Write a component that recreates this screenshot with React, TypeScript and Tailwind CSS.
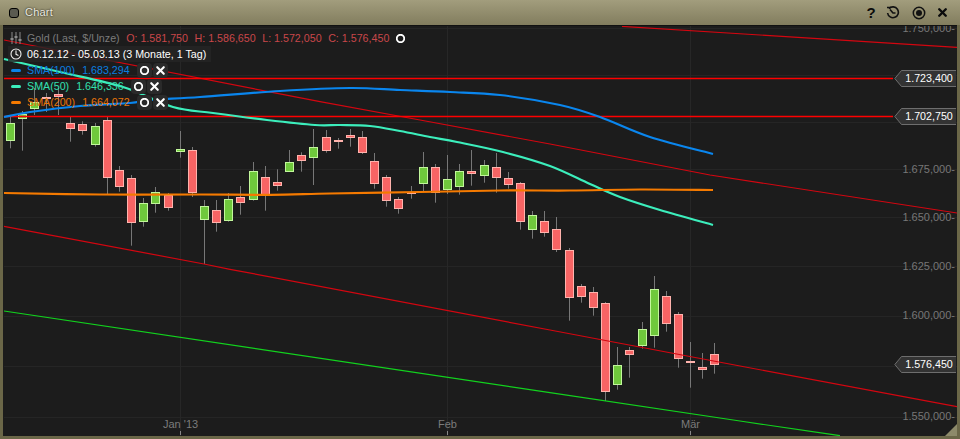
import { Circle, X } from 'lucide-react';

const font = { fontFamily: '"Liberation Sans", Arial, sans-serif' };

type Candle = [number, number, number, number, number, 'g' | 'r'];

// x, wick top, body top, body bottom, wick bottom
const candles: Candle[] = [
  [10.5, 115, 123.3, 140.7, 148.3, 'g'],
  [22.5, 111, 114.3, 118.7, 150.7, 'g'],
  [34.5, 88, 101.7, 108, 115, 'g'],
  [46.5, 93, 97, 98, 112, 'r'],
  [58.5, 88, 94, 96, 115, 'r'],
  [70.5, 117, 123.3, 128.7, 141.7, 'r'],
  [82.5, 121.3, 124.3, 130.7, 134.7, 'r'],
  [95, 123, 126.3, 144.7, 146.7, 'g'],
  [107, 117, 120.3, 177.7, 195, 'r'],
  [119.3, 166, 170.3, 186.7, 191.7, 'r'],
  [131.3, 175, 178.3, 222.7, 245.7, 'r'],
  [143.3, 198, 203.3, 221.7, 226.7, 'g'],
  [155.3, 187, 192.3, 203.7, 212.7, 'g'],
  [168.3, 193, 195, 206.7, 210.7, 'r'],
  [180.3, 131, 149.3, 151.7, 157.7, 'g'],
  [192.3, 147, 150.3, 192.7, 197, 'r'],
  [204.3, 200, 206.3, 219.7, 264, 'g'],
  [216.3, 200, 210.3, 222.7, 231.7, 'r'],
  [228.3, 193, 199.3, 220.7, 221.7, 'g'],
  [240.3, 186, 197.3, 202.7, 214.7, 'r'],
  [253.3, 162, 171.3, 199.7, 200.7, 'g'],
  [265.3, 166, 177.3, 194.7, 210.7, 'r'],
  [277.3, 169.3, 182.3, 185.7, 190.7, 'r'],
  [289.3, 150, 162.3, 171.7, 172, 'g'],
  [301.3, 152.3, 155.3, 160.7, 171.7, 'r'],
  [313.3, 129, 147.3, 157.7, 185, 'g'],
  [326.3, 130, 137.3, 150.7, 152.7, 'r'],
  [338.3, 138, 140, 141, 148.7, 'r'],
  [350.3, 129, 135.3, 137.7, 146.7, 'r'],
  [362.3, 131, 137.3, 152.7, 154, 'r'],
  [374.3, 153, 161.3, 183.7, 188.7, 'r'],
  [386.3, 175, 177.3, 200.7, 206.7, 'r'],
  [398.3, 197, 199.3, 208.7, 213.7, 'r'],
  [411.3, 186, 191.5, 192, 198.7, 'r'],
  [423.3, 152, 167.3, 183.7, 192, 'g'],
  [435.3, 164, 167.3, 192, 202.7, 'r'],
  [447.3, 155, 179.3, 189.7, 194, 'g'],
  [459.3, 164, 171.3, 186.7, 194.7, 'g'],
  [471.3, 150, 171.3, 173.7, 185.7, 'r'],
  [484.3, 160, 165.3, 175.7, 182.7, 'g'],
  [496.3, 153, 167.3, 177.7, 192.7, 'r'],
  [508.3, 172, 178.3, 184.7, 188.7, 'r'],
  [520.3, 182, 183.3, 221.7, 229.7, 'r'],
  [532.3, 211, 215.3, 229.7, 238.7, 'g'],
  [544.3, 211, 221.3, 232.7, 236.7, 'r'],
  [556.3, 217, 229.3, 249.3, 252, 'r'],
  [569.3, 248, 250, 296.7, 320.7, 'r'],
  [581.3, 284, 286.3, 296.7, 302.7, 'r'],
  [593.3, 287, 292.3, 307.7, 315.7, 'r'],
  [605.3, 302, 303.3, 391.7, 401, 'r'],
  [617.3, 347, 365.3, 384.7, 389.7, 'g'],
  [629.3, 347, 350.3, 354.7, 377.7, 'r'],
  [642.3, 322, 329.3, 345.7, 348.7, 'g'],
  [654.3, 276, 289.3, 335.7, 347.7, 'g'],
  [666.3, 291, 296.3, 323.7, 331.7, 'r'],
  [678.3, 312, 314.3, 358.7, 367.7, 'r'],
  [690.3, 342, 361.3, 362.7, 387.7, 'r'],
  [702.3, 353, 367.3, 369.7, 378.7, 'r'],
  [714.3, 343, 354.3, 364.7, 373.7, 'r'],
];

const gridY = [28.5, 75.5, 122.5, 169.5, 217.5, 266.5, 316.5, 366.5, 417.5];
const gridX = [180.5, 447.5, 690.5];

const sma100: number[][] = [[4, 117], [30, 112], [80, 106], [130, 103], [150, 100], [200, 97], [280, 91], [350, 88], [400, 90], [450, 92], [500, 95], [560, 105], [600, 117], [650, 137], [713, 154]];
const sma50: number[][] = [[4, 59], [60, 72], [123, 87], [173, 107], [213, 113], [267, 120], [315, 125], [340, 125], [370, 126], [400, 131], [430, 137], [457, 142], [503, 152], [550, 166], [590, 184], [620, 197], [660, 210], [713, 225]];
const sma200: number[][] = [[4, 193], [100, 194.5], [200, 194.5], [270, 194.8], [330, 193.5], [420, 192], [500, 190.5], [570, 190.5], [640, 189.5], [713, 190]];

const axisLabels = [
  { text: '1.675,000', top: 138 },
  { text: '1.650,000', top: 186 },
  { text: '1.625,000', top: 235 },
  { text: '1.600,000', top: 284 },
  { text: '1.550,000', top: 385 },
];

// catmull-rom through the points so the averages don't look kinked
function smooth(pts: number[][]) {
  let d = `M${pts[0][0]} ${pts[0][1]}`;
  for (let i = 0; i < pts.length - 1; i++) {
    const p0 = pts[i - 1] || pts[i];
    const p1 = pts[i];
    const p2 = pts[i + 1];
    const p3 = pts[i + 2] || p2;
    const c1x = p1[0] + (p2[0] - p0[0]) / 6;
    const c1y = p1[1] + (p2[1] - p0[1]) / 6;
    const c2x = p2[0] - (p3[0] - p1[0]) / 6;
    const c2y = p2[1] - (p3[1] - p1[1]) / 6;
    d += ` C${c1x} ${c1y} ${c2x} ${c2y} ${p2[0]} ${p2[1]}`;
  }
  return d;
}

function PriceTag({ value, top }: { value: string; top: number }) {
  return (
    <div className="absolute right-[1px] flex h-[17px] items-center" style={{ top }}>
      <svg width="9" height="17" viewBox="0 0 9 17" className="-mr-px">
        <path d="M9 .5H7.5L.8 8.5 7.5 16.5H9" fill="#333" stroke="#6e6e6e" />
      </svg>
      <div className="flex h-[17px] w-[54px] items-center justify-center border-y border-[#6e6e6e] bg-[#333] text-[10.7px] leading-none text-white">{value}</div>
    </div>
  );
}

function LegendButtons() {
  return (
    <span className="flex items-center gap-[1px]">
      <span className="flex h-[15px] w-[15px] items-center justify-center rounded-sm bg-[#2a2a2a]">
        <Circle className="h-[9px] w-[9px] text-white" strokeWidth={5} />
      </span>
      <span className="flex h-[15px] w-[15px] items-center justify-center rounded-sm bg-[#2a2a2a]">
        <X className="h-[13px] w-[13px] text-white" strokeWidth={4} />
      </span>
    </span>
  );
}

function SmaRow({ name, value, color, bar }: { name: string; value: string; color: string; bar: string }) {
  return (
    <div className="flex h-[16px] items-center">
      <span className="ml-[7px] mr-[6px] h-[3px] w-[10px] rounded-full" style={{ background: bar }} />
      <span className="flex items-center gap-[7px] whitespace-nowrap" style={{ color }}>
        <span>{name}</span>
        <span>{value}</span>
      </span>
      <span className="ml-[7px]"><LegendButtons /></span>
    </div>
  );
}

export default function App() {
  return (
    <div className="flex h-[439px] w-[960px] flex-col overflow-hidden bg-[#6b6748]" style={font}>
      <div className="flex h-[25px] shrink-0 items-center justify-between bg-gradient-to-b from-[#a29d7d] to-[#827d5e] pl-[9px] pr-[11px]">
        <div className="flex items-center gap-[6px]">
          <span className="h-[10px] w-[10px] rounded-[3px] border border-black bg-[#5a5a50]" />
          <span className="text-[11px] tracking-[0.2px] text-[#ecebe0] [text-shadow:0_0_2px_#000]">Chart</span>
        </div>
        <div className="flex items-center gap-[11px] text-[#0b0b0b]">
          <span className="w-[10px] text-center text-[15px] font-bold leading-none">?</span>
          <svg width="14" height="14" viewBox="0 0 14 14" fill="none" stroke="#111" strokeWidth="1.6" className="-ml-[1px]">
            <path d="M3 2.6A5.4 5.4 0 1 1 1.6 7" />
            <path d="M1 1.5h4.2M4 3.5l3 3.5h2.5" />
          </svg>
          <svg width="14" height="14" viewBox="0 0 14 14" className="ml-[1px]">
            <circle cx="7" cy="7" r="5.7" fill="none" stroke="#111" strokeWidth="1.5" />
            <circle cx="7" cy="7" r="3" fill="#111" />
          </svg>
          <X className="-ml-[1px] h-[13px] w-[13px] text-[#0b0b0b]" strokeWidth={4.5} />
        </div>
      </div>

      <div className="flex flex-1 pb-[3px] pl-[3px] pr-[3px]">
        <div className="relative flex-1 overflow-hidden border-t border-[#111] bg-[#1c1c1c]">
          <svg className="absolute left-[-3px] top-[-26px]" width="960" height="439" viewBox="0 0 960 439">
            {gridY.map(y => <line key={y} x1="4" x2="957" y1={y} y2={y} stroke="#252525" />)}
            {gridX.map(x => <line key={x} x1={x} x2={x} y1="26" y2="436" stroke="#272727" />)}
            {gridX.map(x => <line key={x} x1={x} x2={x} y1="431" y2="435" stroke="#888" />)}

            <polyline fill="none" stroke="#d40610" strokeWidth="1.2" points="622,26.4 760,35 957,47.3" />
            <polyline fill="none" stroke="#d40610" strokeWidth="1.2" points="4,40 320,101.7 420,120 550,144 710,175 957,213" />

            {candles.map(([x, wt, bt, bb, wb, kind]) => {
              const green = kind === 'g';
              const left = Math.floor(x - 4) + 0.5;
              return (
                <g key={x}>
                  <line x1={left + 4} x2={left + 4} y1={wt} y2={wb} stroke="#777" />
                  <rect x={left} y={Math.round(bt) + 0.5} width="8" height={Math.max(1, Math.round(bb - bt))} fill={green ? '#6fc83c' : '#f76464'} stroke={green ? '#c2f79c' : '#ffb3ad'} />
                </g>
              );
            })}

            <polyline fill="none" stroke="#d40610" strokeWidth="1.2" points="4,226.3 204,264 230,269.3 550,330 740,366 957,406.7" />
            <polyline fill="none" stroke="#12d21e" strokeWidth="1.2" points="4,311 550,392.7 740,421 840,435.7" />
            <line x1="4" x2="893" y1="78.5" y2="78.5" stroke="#f00" strokeWidth="1.3" />
            <line x1="4" x2="893" y1="116.5" y2="116.5" stroke="#f00" strokeWidth="1.3" />

            <path d={smooth(sma100)} fill="none" stroke="#0a86ee" strokeWidth="2.2" />
            <path d={smooth(sma50)} fill="none" stroke="#3ceebc" strokeWidth="2.2" />
            <path d={smooth(sma200)} fill="none" stroke="#f57a00" strokeWidth="2.2" />
            <path d="M957 436V424L945 436Z" fill="#8d8a6a" />
          </svg>

          <div className="absolute left-[1px] top-[4px] flex flex-col text-[10.7px] leading-none">
            <div className="flex h-[16px] items-center gap-[6.5px] whitespace-nowrap">
              <svg width="12" height="12" viewBox="0 0 12 12" className="ml-[6px] mr-[-1.5px]" stroke="#8a8a8a" fill="none">
                <path d="M2 0v12M6 0v12M10 0v12" />
                <path d="M.5 7h3M4.5 5h3M8.5 8h3" strokeWidth="2" />
              </svg>
              <span className="text-[#7b7b7b]">Gold (Last, $/Unze)</span>
              <span className="text-[#c9474a]">O: 1.581,750</span>
              <span className="text-[#c9474a]">H: 1.586,650</span>
              <span className="text-[#c9474a]">L: 1.572,050</span>
              <span className="text-[#c9474a]">C: 1.576,450</span>
              <Circle className="h-[9px] w-[9px] text-white" strokeWidth={5} />
            </div>
            <div className="ml-[4px] flex h-[16px] w-fit items-center gap-[5px] whitespace-nowrap bg-[#262626]/80 pl-[2px] pr-[5px] text-white">
              <svg width="12" height="12" viewBox="0 0 12 12" fill="none" stroke="#eee" strokeWidth="1.1">
                <circle cx="6" cy="6" r="5" />
                <path d="M6 2.5V6.3L8.5 7.5" />
              </svg>
              <span>06.12.12 - 05.03.13 (3 Monate, 1 Tag)</span>
            </div>
            <SmaRow name="SMA(100)" value="1.683,294" color="#0a7fe0" bar="#0a84e8" />
            <SmaRow name="SMA(50)" value="1.646,336" color="#33e0b0" bar="#3ceebc" />
            <SmaRow name="SMA(200)" value="1.664,072" color="#e8750a" bar="#f57a00" />
          </div>

          <div className="absolute right-[2px] top-[-3px] text-[11px] leading-none text-[#777]">1.750,000-</div>
          {axisLabels.map(l => (
            <div key={l.text} className="absolute right-[2px] text-[11px] leading-none text-[#777]" style={{ top: l.top }}>{l.text}-</div>
          ))}
          <PriceTag value="1.723,400" top={44} />
          <PriceTag value="1.702,750" top={82} />
          <PriceTag value="1.576,450" top={330} />

          <div className="absolute left-[160px] top-[393px] text-[11px] leading-none text-[#7b7b7b]">Jan '13</div>
          <div className="absolute left-[435px] top-[393px] text-[11px] leading-none text-[#7b7b7b]">Feb</div>
          <div className="absolute left-[678px] top-[393px] text-[11px] leading-none text-[#7b7b7b]">Mär</div>
        </div>
      </div>
    </div>
  );
}
